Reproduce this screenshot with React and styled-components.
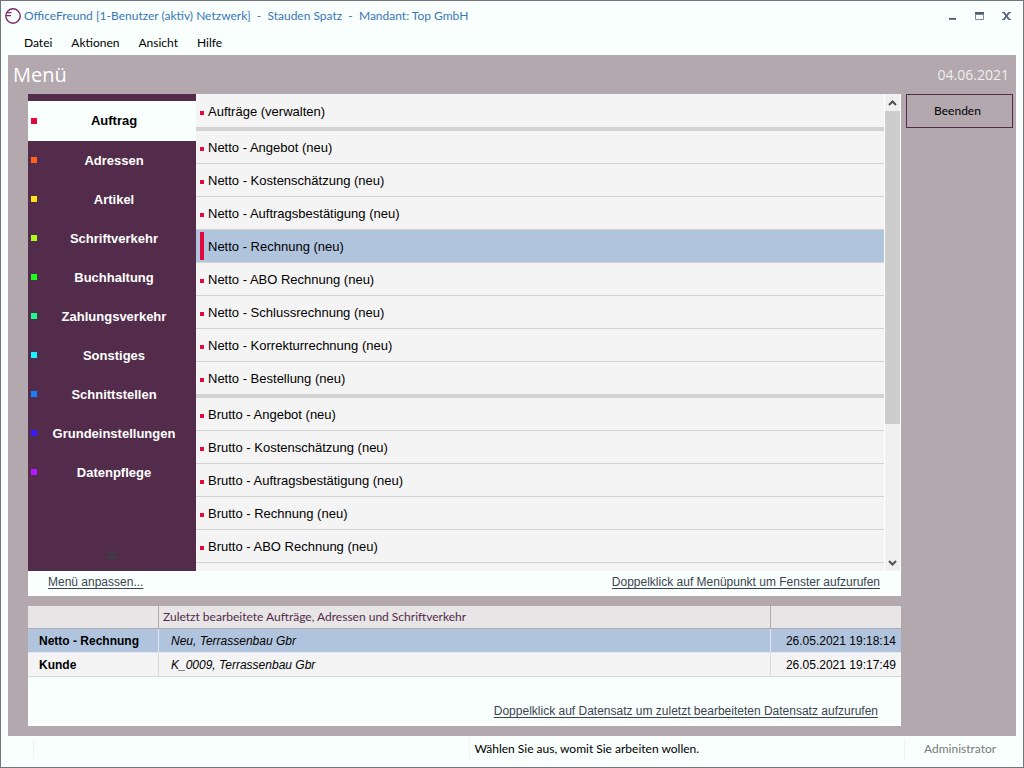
import React from "react";
import styled, { createGlobalStyle, css } from "styled-components";

const ui = `Lato, "Segoe UI", sans-serif`;
const display = `"Open Sans", "Segoe UI", sans-serif`;
const arial = `"Liberation Sans", Arial, sans-serif`;
const paper = "#f8fffd";
const plum = "#522c4a";
const mauve = "#b2a8ad";
const selected = "#b0c4de";

const GlobalStyle = createGlobalStyle`
  * { box-sizing: border-box; }
  body { margin: 0; background: ${paper}; }
  button { font: inherit; color: inherit; border: 0; background: none; padding: 0; margin: 0; }
`;

const Window = styled.div`
  display: flex;
  flex-direction: column;
  height: 100vh;
  min-height: 500px;
  background: ${paper};
  border: 1px solid #72757f;
  font-family: ${ui};
  font-size: 12px;
  line-height: 16px;
  color: #000;
`;

const TitleBar = styled.header`
  display: flex;
  align-items: center;
  gap: 3px;
  height: 30px;
  padding: 0 3px 0 4px;
`;

const Title = styled.h1`
  margin: 0;
  flex: 1;
  font-size: 12px;
  font-weight: 400;
  white-space: pre;
  color: #3a76b8;
`;

const WindowButtons = styled.div`
  display: flex;
`;

const WindowButton = styled.button`
  display: grid;
  place-items: center;
  width: 27px;
  height: 24px;
`;

const MenuBar = styled.nav`
  display: flex;
  gap: 19px;
  height: 24px;
  align-items: center;
  padding-left: 23px;
`;

const Body = styled.main`
  flex: 1;
  min-height: 0;
  display: flex;
  flex-direction: column;
  margin: 0 7px;
  padding-bottom: 10px;
  background: ${mauve};
`;

const BodyHeader = styled.div`
  display: flex;
  justify-content: space-between;
  align-items: center;
  height: 39px;
  padding: 0 7px 0 5px;
  color: #fff;
  font-family: ${display};
`;

const Heading = styled.h2`
  margin: 0;
  font-size: 20px;
  line-height: 28px;
  font-weight: 400;
`;

const Today = styled.span`
  font-size: 14px;
  color: #f0eeee;
`;

const Columns = styled.div`
  flex: 1;
  min-height: 0;
  display: flex;
  gap: 5px;
  padding: 0 3px 0 20px;
`;

const Main = styled.div`
  flex: 1;
  min-width: 0;
  display: flex;
  flex-direction: column;
  gap: 10px;
`;

const ExitButton = styled.button`
  width: 107px;
  height: 34px;
  padding-right: 4px;
  border: 1px solid ${plum};
`;

const MenuPanel = styled.section`
  flex: 1;
  min-height: 0;
  display: flex;
  flex-direction: column;
  background: ${paper};
`;

const MenuArea = styled.div`
  flex: 1;
  min-height: 0;
  display: flex;
`;

const Sidebar = styled.nav`
  display: flex;
  flex-direction: column;
  flex: none;
  width: 168px;
  padding-top: 7px;
  background: ${plum};
`;

const Category = styled.button`
  display: flex;
  align-items: center;
  flex: none;
  height: ${(p) => (p.$active ? 40 : 39)}px;
  padding: 0 5px 0 3px;
  font: bold 13px/16px ${arial};
  color: ${(p) => (p.$active ? "#000" : "#fff")};
  background: ${(p) => (p.$active ? paper : "transparent")};

  &::before {
    content: "";
    width: 6px;
    height: 6px;
    margin-bottom: ${(p) => (p.$active ? 0 : 1)}px;
    background: ${(p) => p.$color};
  }

  span {
    flex: 1;
    text-align: center;
  }
`;

const MoreButton = styled.button`
  margin: auto auto 10px;
  width: 10px;
  height: 10px;
  display: grid;
`;

const EntryList = styled.ul`
  flex: 1;
  min-width: 0;
  margin: 0;
  padding: 1px 0 0;
  list-style: none;
  overflow: hidden;
  background: #f4f4f4;
`;

const Entry = styled.li`
  display: flex;
  align-items: center;
  gap: 4px;
  height: ${(p) => (p.$groupEnd ? 36 : 33)}px;
  padding-left: 4px;
  border-bottom: ${(p) => (p.$groupEnd ? 4 : 1)}px solid #d2d2d2;
  font: 13px/16px ${arial};
  ${(p) => p.$selected && css`background: ${selected};`}

  span {
    padding-top: 1px;
  }

  &::before {
    content: "";
    width: 4px;
    height: ${(p) => (p.$selected ? 28 : 4)}px;
    margin-top: ${(p) => (p.$selected ? 0 : 3)}px;
    background: #e3093f;
  }
`;

const ScrollBar = styled.div`
  display: flex;
  flex-direction: column;
  flex: none;
  width: 17px;
  border: solid #fff;
  border-width: 0 1px;
  background: #f0f0f0;
`;

const ScrollButton = styled.button`
  display: grid;
  place-items: center;
  height: 17px;
`;

const ScrollTrack = styled.div`
  flex: 1;
`;

const ScrollThumb = styled.div`
  height: 70.7%;
  background: #cdcdcd;
`;

const PanelFooter = styled.div`
  display: flex;
  justify-content: space-between;
  padding: 3px 21px 6px 20px;
`;

const TextLink = styled.a`
  font: 12px/16px ${arial};
  color: #3c4450;
  text-decoration: underline;
  text-underline-offset: 2px;
`;

const RecentPanel = styled.section`
  display: flex;
  flex-direction: column;
  justify-content: space-between;
  height: 120px;
  background: ${paper};
`;

const RecentFooter = styled.div`
  padding: 0 23px 7px;
  text-align: right;
`;

const RecentTable = styled.table`
  width: 100%;
  table-layout: fixed;
  border-collapse: separate;
  border-spacing: 0;
`;

const HeadCell = styled.th`
  width: ${(p) => p.$width || "auto"};
  height: 23px;
  padding: 0 4px;
  text-align: left;
  font-weight: 400;
  color: ${plum};
  background: #e8e5e6;
  border: solid ${mauve};
  border-width: 0 1px 1px 0;
  &:last-child { border-right: 0; }
`;

const Row = styled.tr`
  background: ${(p) => (p.$selected ? selected : "#f4f4f4")};
  td { border-color: ${(p) => (p.$selected ? "#e6e6fa" : "#d9d9d9")}; }
`;

const Cell = styled.td`
  height: 24px;
  padding: 0 5px 0 12px;
  border: 0 solid;
  border-width: 0 1px 1px 0;
  font: ${(p) => p.$font || "normal"} 12px/16px ${arial};
  white-space: nowrap;
  &:first-child { padding-left: 11px; }
  &:last-child { border-right: 0; text-align: right; }
`;

const StatusBar = styled.footer`
  display: flex;
  align-items: center;
  height: 31px;
  padding: 0 7px 5px 32px;
`;

const StatusCell = styled.div`
  flex: ${(p) => p.$flex};
  display: flex;
  align-items: center;
  height: 20px;
  padding-left: ${(p) => p.$indent || 5}px;
  border-left: 1px solid #eef2f1;
  color: ${(p) => p.$color || "#000"};
`;

const categories = [
  ["Auftrag", "#e3093f"],
  ["Adressen", "#ff6319"],
  ["Artikel", "#ffe119"],
  ["Schriftverkehr", "#a8ff19"],
  ["Buchhaltung", "#19ff19"],
  ["Zahlungsverkehr", "#19ff8c"],
  ["Sonstiges", "#19f4ff"],
  ["Schnittstellen", "#197dff"],
  ["Grundeinstellungen", "#3a19ff"],
  ["Datenpflege", "#b619ff"],
];

const entries = [
  "Aufträge (verwalten)",
  "Netto - Angebot (neu)",
  "Netto - Kostenschätzung (neu)",
  "Netto - Auftragsbestätigung (neu)",
  "Netto - Rechnung (neu)",
  "Netto - ABO Rechnung (neu)",
  "Netto - Schlussrechnung (neu)",
  "Netto - Korrekturrechnung (neu)",
  "Netto - Bestellung (neu)",
  "Brutto - Angebot (neu)",
  "Brutto - Kostenschätzung (neu)",
  "Brutto - Auftragsbestätigung (neu)",
  "Brutto - Rechnung (neu)",
  "Brutto - ABO Rechnung (neu)",
];
const groupEnds = [0, 8];

const Logo = () => (
  <svg width="16" height="16" viewBox="0 0 16 16" fill="none" stroke="#7d2b6c" aria-hidden="true">
    <circle cx="8" cy="8" r="7.2" strokeWidth="1.4" />
    <path d="M2 4.7H6.5M1 7.7H6" strokeWidth="1.3" />
  </svg>
);

const Chevron = ({ up }) => (
  <svg width="9" height="6" viewBox="0 0 9 6" fill="none" stroke="#505050" strokeWidth="2" aria-hidden="true">
    <path d={up ? "M1 5L4.5 1.5L8 5" : "M1 1L4.5 4.5L8 1"} />
  </svg>
);

export default function App() {
  return (
    <Window>
      <GlobalStyle />
      <TitleBar>
        <Logo />
        <Title>{"OfficeFreund [1-Benutzer (aktiv) Netzwerk]  -  Stauden Spatz  -  Mandant: Top GmbH"}</Title>
        <WindowButtons>
          <WindowButton aria-label="Minimieren">
            <svg width="9" height="9" viewBox="0 0 9 9"><path d="M1 6H8V7H1z" fill="#454e60" /><path d="M1 7H8V8H1z" fill="#7888a5" /></svg>
          </WindowButton>
          <WindowButton aria-label="Maximieren">
            <svg width="9" height="8" viewBox="0 0 9 8"><path d="M0 0H9V3H0z" fill="#7888a5" /><path d="M0 0H9V2H0z" fill="#515b6e" /><path d="M.5 2V7.5H8.5V2" fill="none" stroke="#7888a5" /></svg>
          </WindowButton>
          <WindowButton aria-label="Schließen">
            <svg width="9" height="8" viewBox="0 0 9 8"><path d="M1.5 0L7.5 8M7.5 0L1.5 8" stroke="#5f6b80" strokeWidth="2" /><path d="M0 .5H3M6 .5H9M0 7.5H3M6 7.5H9" stroke="#5f6b80" /></svg>
          </WindowButton>
        </WindowButtons>
      </TitleBar>
      <MenuBar>
        {["Datei", "Aktionen", "Ansicht", "Hilfe"].map((m) => <button key={m}>{m}</button>)}
      </MenuBar>
      <Body>
        <BodyHeader>
          <Heading>Menü</Heading>
          <Today>04.06.2021</Today>
        </BodyHeader>
        <Columns>
          <Main>
            <MenuPanel>
              <MenuArea>
                <Sidebar>
                  {categories.map(([name, color], i) => (
                    <Category key={name} $color={color} $active={i === 0}><span>{name}</span></Category>
                  ))}
                  <MoreButton aria-label="Weitere">
                    <svg width="10" height="10" viewBox="0 0 10 10" fill="#3a4248"><path d="M0 1H10V3H0zM0 5H10L5 10z" /></svg>
                  </MoreButton>
                </Sidebar>
                <EntryList>
                  {entries.map((text, i) => (
                    <Entry key={text} $selected={i === 4} $groupEnd={groupEnds.includes(i)}><span>{text}</span></Entry>
                  ))}
                </EntryList>
                <ScrollBar>
                  <ScrollButton aria-label="Nach oben"><Chevron up /></ScrollButton>
                  <ScrollTrack><ScrollThumb /></ScrollTrack>
                  <ScrollButton aria-label="Nach unten"><Chevron /></ScrollButton>
                </ScrollBar>
              </MenuArea>
              <PanelFooter>
                <TextLink href="#anpassen">Menü anpassen...</TextLink>
                <TextLink href="#fenster">Doppelklick auf Menüpunkt um Fenster aufzurufen</TextLink>
              </PanelFooter>
            </MenuPanel>
            <RecentPanel>
              <RecentTable>
                <thead>
                  <tr>
                    <HeadCell $width="131px" />
                    <HeadCell>Zuletzt bearbeitete Aufträge, Adressen und Schriftverkehr</HeadCell>
                    <HeadCell $width="130px" />
                  </tr>
                </thead>
                <tbody>
                  <Row $selected>
                    <Cell $font="bold">Netto - Rechnung</Cell>
                    <Cell $font="italic">Neu, Terrassenbau Gbr</Cell>
                    <Cell>26.05.2021 19:18:14</Cell>
                  </Row>
                  <Row>
                    <Cell $font="bold">Kunde</Cell>
                    <Cell $font="italic">K_0009, Terrassenbau Gbr</Cell>
                    <Cell>26.05.2021 19:17:49</Cell>
                  </Row>
                </tbody>
              </RecentTable>
              <RecentFooter>
                <TextLink href="#datensatz">Doppelklick auf Datensatz um zuletzt bearbeiteten Datensatz aufzurufen</TextLink>
              </RecentFooter>
            </RecentPanel>
          </Main>
          <ExitButton>Beenden</ExitButton>
        </Columns>
      </Body>
      <StatusBar>
        <StatusCell $flex="1" />
        <StatusCell $flex="1">Wählen Sie aus, womit Sie arbeiten wollen.</StatusCell>
        <StatusCell $flex="0 0 112px" $indent={19} $color="#7a7a7a">Administrator</StatusCell>
      </StatusBar>
    </Window>
  );
}
